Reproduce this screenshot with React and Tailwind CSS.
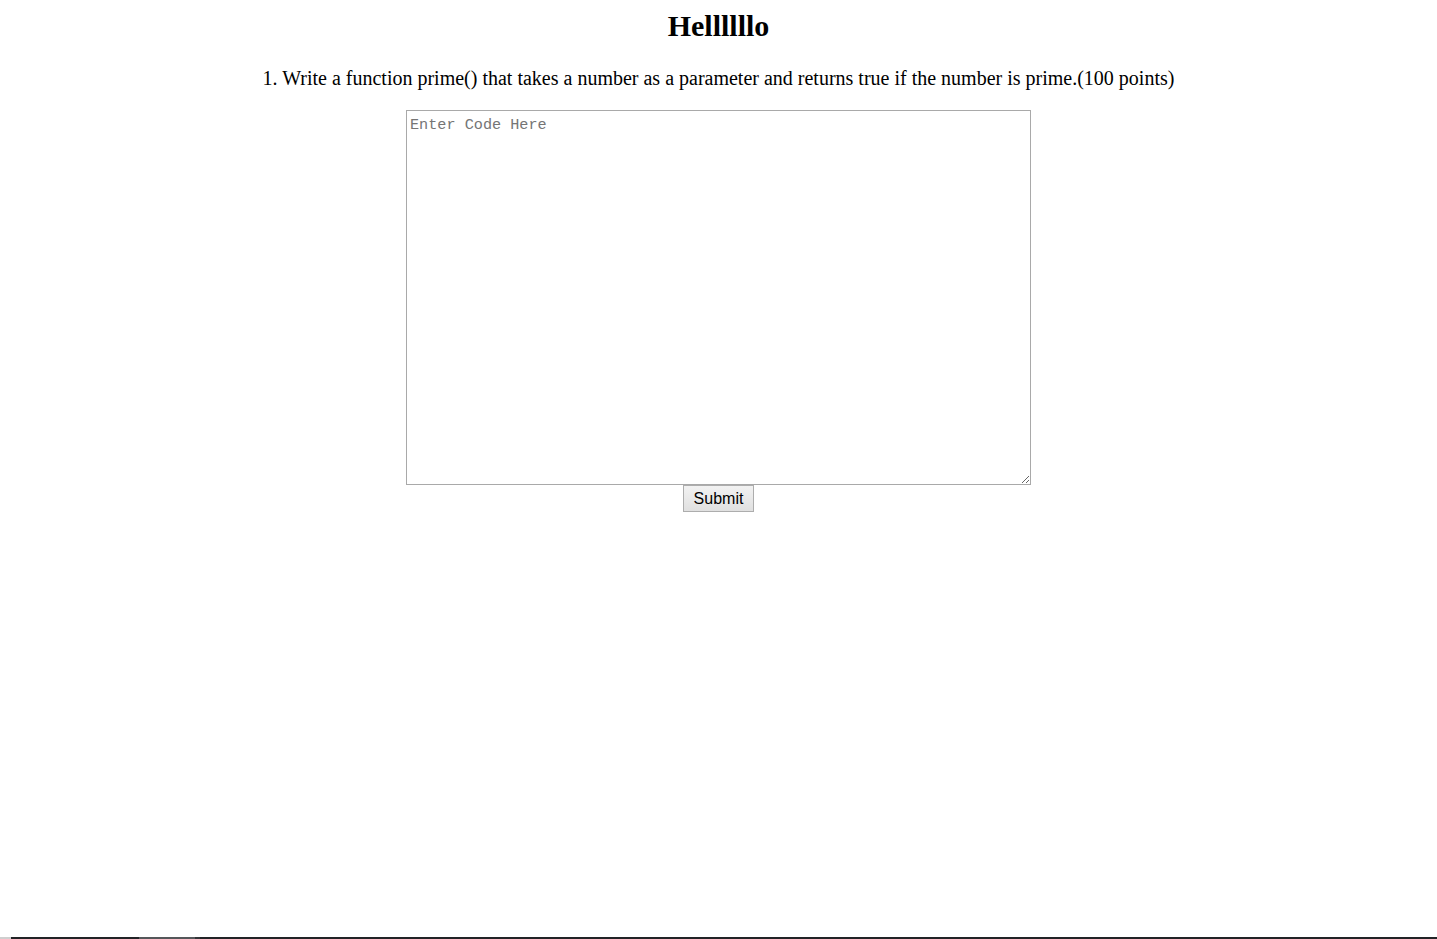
export default function App() {
  return (
    <div className="min-h-screen flex flex-col bg-white text-black">
      <div className="flex flex-col items-center pt-2 font-['Liberation_Serif','Times_New_Roman',serif]">
        <h1 className="text-[30px] font-bold leading-[35px]">Hellllllo</h1>
        <p className="mt-[24px] text-[20px] leading-[23px]">
          1. Write a function prime() that takes a number as a parameter and returns true if the number is prime.(100 points)
        </p>
        <textarea
          placeholder="Enter Code Here"
          className="mt-[20px] block h-[375px] w-[625px] border border-[#a9a9a9] px-[3px] pt-[5px] pb-[4px] font-['Liberation_Mono',monospace] text-[15.2px] leading-[18px] placeholder:text-[#757575] outline-none"
        />
        <button
          type="button"
          className="block h-[27px] w-[71px] border border-[#adadad] bg-linear-to-b from-[#f2f2f2] to-[#e0e0e0] font-['Liberation_Sans',Arial,sans-serif] text-[16px] leading-[18px] text-black"
        >
          Submit
        </button>
      </div>
      <div className="mt-auto flex h-[2px]">
        <div className="w-[11px] bg-[#cfcfcf]" />
        <div className="w-[128px] bg-[#222326]" />
        <div className="w-[56px] bg-[#55575a]" />
        <div className="w-[5px] bg-[#333438]" />
        <div className="flex-1 bg-[#222326]" />
      </div>
    </div>
  );
}
